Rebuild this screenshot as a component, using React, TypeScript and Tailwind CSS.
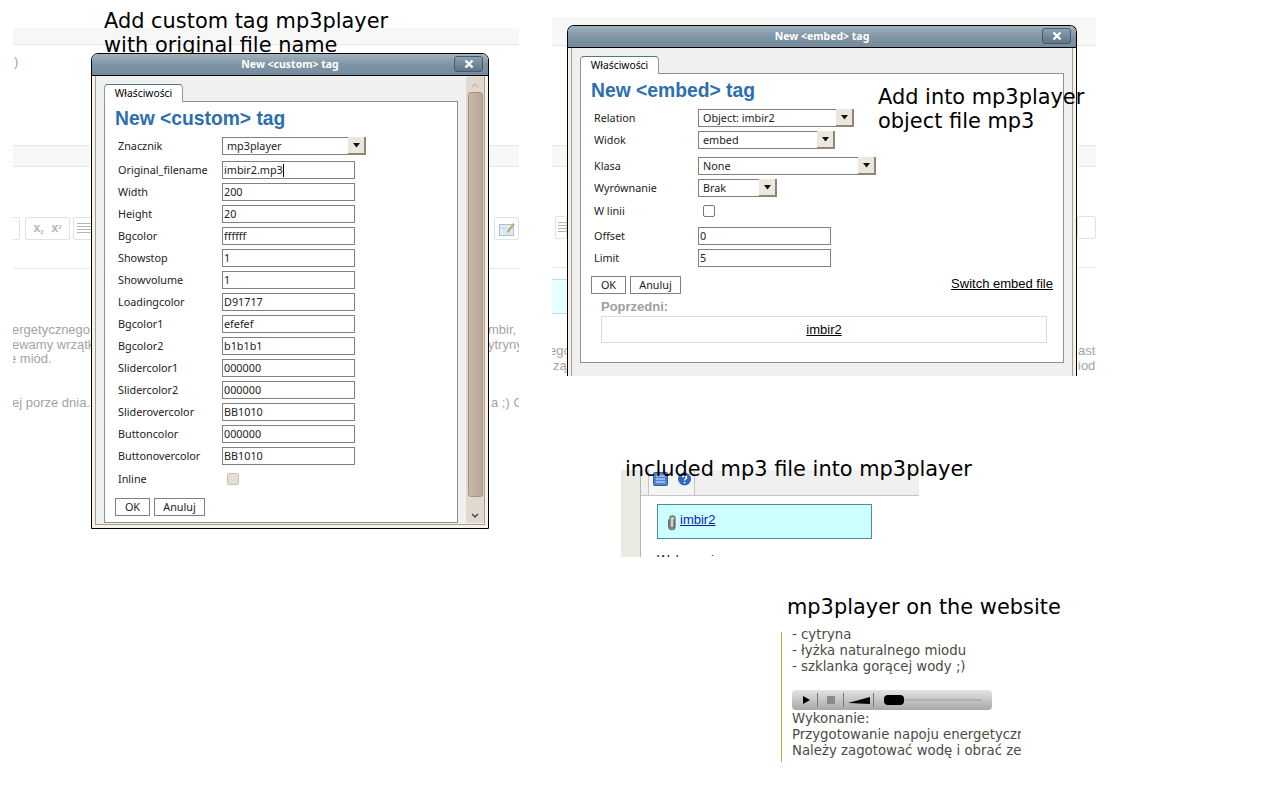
const customFields = [
  ["Original_filename", "imbir2.mp3"],
  ["Width", "200"],
  ["Height", "20"],
  ["Bgcolor", "ffffff"],
  ["Showstop", "1"],
  ["Showvolume", "1"],
  ["Loadingcolor", "D91717"],
  ["Bgcolor1", "efefef"],
  ["Bgcolor2", "b1b1b1"],
  ["Slidercolor1", "000000"],
  ["Slidercolor2", "000000"],
  ["Sliderovercolor", "BB1010"],
  ["Buttoncolor", "000000"],
  ["Buttonovercolor", "BB1010"],
];

function Caption({ className, children }: { className: string; children: React.ReactNode }) {
  return (
    <div className={`absolute whitespace-nowrap font-['DejaVu_Sans',sans-serif] text-[20.9px] leading-[24px] text-black ${className}`}>
      {children}
    </div>
  );
}

function TitleBar({ title }: { title: string }) {
  return (
    <div className="relative flex h-[22px] shrink-0 items-center justify-center rounded-t-[6px] border-b border-black bg-gradient-to-b from-[#a4b2bc] via-[#7f95a6] to-[#748c9e] font-['Noto_Sans',sans-serif] text-[10.5px] font-bold text-white">
      {title}
      <div className="absolute right-[5px] top-[2px] flex h-[16px] w-[29px] items-center justify-center rounded-[3px] border border-[#47596a] bg-gradient-to-b from-[#8ca0b0] to-[#5e7689]">
        <svg width="10" height="10" viewBox="0 0 10 10">
          <path d="M1.5 1.5 L8.5 8.5 M8.5 1.5 L1.5 8.5" stroke="#fff" strokeWidth="2.4" />
        </svg>
      </div>
    </div>
  );
}

function Tab() {
  return (
    <div className="relative z-10 -mb-px flex h-[18px] w-[79px] items-center justify-center rounded-t-[4px] border border-b-0 border-[#8b9aa3] border-t-[#50788f] bg-white font-['Noto_Sans',sans-serif] text-[10.3px] text-black">
      Właściwości
    </div>
  );
}

function Label({ children }: { children: React.ReactNode }) {
  return <div className="w-[107px] shrink-0 pl-[3px]">{children}</div>;
}

function TextField({ label, value, caret }: { label: string; value: string; caret?: boolean }) {
  return (
    <div className="flex h-[18px] items-center">
      <Label>{label}</Label>
      <div className="flex h-[18px] w-[133px] items-center border border-[#808080] bg-white pl-[1px]">
        {value}
        {caret && <span className="h-[13px] w-px bg-black" />}
      </div>
    </div>
  );
}

function SelectField({ label, value, width }: { label: string; value: string; width: string }) {
  return (
    <div className="flex h-[18px] items-center">
      <Label>{label}</Label>
      <div className={`flex h-[18px] items-center justify-between border border-[#808080] bg-white pl-[4px] ${width}`}>
        {value}
        <div className="-mr-px flex h-[18px] w-[18px] items-center justify-center border-r-2 border-b-2 border-[#8f8676] bg-[#ebe7df]">
          <svg width="7" height="5" viewBox="0 0 7 5">
            <path d="M0 0 H7 L3.5 4.5 Z" fill="#111" />
          </svg>
        </div>
      </div>
    </div>
  );
}

function Btn({ children, width }: { children: React.ReactNode; width: string }) {
  return (
    <div className={`flex h-[18px] items-center justify-center border border-[#808080] bg-white ${width}`}>{children}</div>
  );
}

function ScrollBar() {
  return (
    <div className="flex h-full w-[18px] flex-col items-center rounded-[2px] bg-[#e2d9ce] pt-[5px]">
      <svg width="12" height="11" viewBox="0 0 12 11" className="shrink-0">
        <path d="M3 6 L6 3 L9 6" stroke="#c9bdb0" strokeWidth="1.5" fill="none" />
      </svg>
      <div className="h-[405px] w-[15px] shrink-0 rounded-[3px] border border-[#a39484] bg-gradient-to-r from-[#c9b9a9] to-[#b8a797]" />
      <svg width="12" height="11" viewBox="0 0 12 11" className="mt-[13px] shrink-0">
        <path d="M3 4 L6 7 L9 4" stroke="#444" strokeWidth="1.5" fill="none" />
      </svg>
    </div>
  );
}

// faded editor page behind the dialogs
function Backdrop({ className, children }: { className: string; children: React.ReactNode }) {
  return (
    <div className={`absolute overflow-hidden bg-white font-['Liberation_Sans',sans-serif] text-[13px] leading-[15px] text-[#a3a3a3] ${className}`}>
      {children}
    </div>
  );
}

function Band({ className }: { className: string }) {
  return <div className={`absolute inset-x-0 border-b border-[#e6e6e6] bg-[#f7f7f7] ${className}`} />;
}

export default function App() {
  return (
    <div className="relative h-[800px] w-[1280px] overflow-hidden bg-white">
      {/* first screenshot, page behind */}
      <Backdrop className="left-[13px] top-[28px] h-[400px] w-[506px]">
        <Band className="top-0 h-[17px]" />
        <div className="absolute left-[1px] top-[26px]">)</div>
        <div className="absolute inset-x-0 top-[117px] h-[22px] border-y border-[#e6e6e6] bg-[#f7f7f7]" />
        <div className="absolute left-0 top-[189px] h-[23px] w-[7px] rounded-r-[2px] border border-l-0 border-[#e2e2e2]" />
        <div className="absolute left-[12px] top-[189px] flex h-[23px] w-[45px] items-center justify-center gap-[8px] rounded-[2px] border border-[#e2e2e2] text-[12px] font-bold text-[#b5b5b5]">
          <span>x<sub className="text-[6px]">2</sub></span>
          <span>x<sup className="text-[6px]">2</sup></span>
        </div>
        <div className="absolute left-[60px] top-[189px] h-[23px] w-[30px] rounded-[2px] border border-[#e2e2e2] pl-[3px] pt-[5px]">
          <div className="h-[10px] w-[14px] bg-[repeating-linear-gradient(#b5b5b5_0_1px,transparent_1px_3px)]" />
        </div>
        <div className="absolute right-0 top-[189px] flex h-[23px] w-[25px] items-center justify-center rounded-[2px] border border-[#e2e2e2]">
          <svg width="18" height="16" viewBox="0 0 18 16">
            <rect x="1.5" y="3.5" width="14" height="11" fill="#e3edf4" stroke="#a9c0d2" />
            <path d="M1.5 7 H15.5 M6 7 V14.5 M11 7 V14.5" stroke="#c5d6e2" />
            <path d="M9 10 L15 2 L17 3.5 L11 11 L8.5 12 Z" fill="#b9ad7c" />
          </svg>
        </div>
        <div className="absolute inset-x-0 top-[240px] border-b border-[#e6e6e6]" />
        <div className="absolute -left-[1px] top-[294px] whitespace-nowrap">ergetycznego</div>
        <div className="absolute -left-[1px] top-[309px] whitespace-nowrap">ewamy wrzątk</div>
        <div className="absolute -left-[4px] top-[323px] whitespace-nowrap">e miód.</div>
        <div className="absolute -left-[1px] top-[367px] whitespace-nowrap">ej porze dnia.</div>
        <div className="absolute left-[475px] top-[294px] whitespace-nowrap">mbir,</div>
        <div className="absolute left-[475px] top-[309px] whitespace-nowrap">ytryny</div>
        <div className="absolute left-[478px] top-[367px] whitespace-nowrap">a ;) Go</div>
      </Backdrop>

      <Caption className="left-[104px] top-[9px]">
        Add custom tag mp3player
        <br />
        with original file name
      </Caption>

      {/* custom tag dialog */}
      <div className="absolute left-[91px] top-[53px] z-10 flex h-[476px] w-[398px] flex-col rounded-t-[7px] border border-black bg-[#f6f2ea] font-['Noto_Sans',sans-serif] text-[10.8px] text-[#222]">
        <TitleBar title="New <custom> tag" />
        <div className="flex min-h-0 flex-1 pl-[3px] pr-[3px] pb-[3px]">
          <div className="flex min-w-0 flex-1 border-x border-b border-[#a79e92] bg-[#f0f0ee] pl-[8px]">
            <div className="flex w-[354px] shrink-0 flex-col pt-[8px] pb-[1px]">
              <Tab />
              <div className="flex flex-1 flex-col border border-[#8b9197] bg-white pl-[10px] pt-[6px]">
                <div className="mb-[7px] font-['Liberation_Sans',sans-serif] text-[19.3px] font-bold leading-[22px] text-[#2b6fb0]">
                  New &lt;custom&gt; tag
                </div>
                <div className="flex flex-col gap-[4px]">
                  <div className="mb-[2px]">
                    <SelectField label="Znacznik" value="mp3player" width="w-[144px]" />
                  </div>
                  {customFields.map(([label, value]) => (
                    <TextField key={label} label={label} value={value} caret={label === "Original_filename"} />
                  ))}
                </div>
                <div className="mt-[5px] flex h-[18px] items-center">
                  <Label>Inline</Label>
                  <div className="ml-[5px] h-[12px] w-[12px] rounded-[2px] border border-[#c9c2b8] bg-[#e6dfd5]" />
                </div>
                <div className="mt-[10px] flex gap-[4px]">
                  <Btn width="w-[35px]">OK</Btn>
                  <Btn width="w-[51px]">Anuluj</Btn>
                </div>
              </div>
            </div>
            <div className="ml-[8px] pb-[1px]">
              <ScrollBar />
            </div>
          </div>
        </div>
      </div>

      {/* second screenshot, page behind */}
      <Backdrop className="left-[552px] top-[17px] h-[359px] w-[544px]">
        <Band className="top-0 h-[29px]" />
        <div className="absolute inset-x-0 top-[128px] h-[22px] border-y border-[#e6e6e6] bg-[#f7f7f7]" />
        <div className="absolute left-[3px] top-[199px] h-[23px] w-[12px] rounded-[2px] border border-[#e2e2e2] pl-[2px] pt-[5px]">
          <div className="h-[10px] w-[10px] bg-[repeating-linear-gradient(#b5b5b5_0_1px,transparent_1px_3px)]" />
        </div>
        <div className="absolute right-0 top-[199px] h-[23px] w-[19px] rounded-[2px] border border-[#e2e2e2]" />
        <div className="absolute inset-x-0 top-[250px] border-b border-[#e6e6e6]" />
        <div className="absolute left-0 top-[262px] h-[35px] w-[16px] border-y border-[#b7dfe5] bg-[#e6ffff]" />
        <div className="absolute -left-[3px] top-[326px] whitespace-nowrap">ego</div>
        <div className="absolute left-[1px] top-[341px] whitespace-nowrap">ząt</div>
        <div className="absolute left-[526px] top-[326px] whitespace-nowrap">aste</div>
        <div className="absolute left-[526px] top-[341px] whitespace-nowrap">iod</div>
      </Backdrop>

      {/* embed tag dialog, cut off at the bottom */}
      <div className="absolute left-[567px] top-[25px] z-10 flex h-[351px] w-[510px] flex-col rounded-t-[7px] border border-b-0 border-black bg-[#f6f2ea] font-['Noto_Sans',sans-serif] text-[10.8px] text-[#222]">
        <TitleBar title="New <embed> tag" />
        <div className="flex min-h-0 flex-1 px-[3px]">
          <div className="flex min-w-0 flex-1 flex-col border-x border-[#a79e92] bg-[#f0f0ee] pl-[8px] pt-[8px]">
            <Tab />
            <div className="relative flex h-[290px] w-[484px] flex-col border border-[#8b9197] bg-white pl-[10px] pt-[6px]">
              <div className="mb-[7px] font-['Liberation_Sans',sans-serif] text-[19.3px] font-bold leading-[22px] text-[#2b6fb0]">
                New &lt;embed&gt; tag
              </div>
              <div className="flex flex-col gap-[4px]">
                <SelectField label="Relation" value="Object:  imbir2" width="w-[156px]" />
                <SelectField label="Widok" value="embed" width="w-[137px]" />
              </div>
              <div className="mt-[8px] flex flex-col gap-[4px]">
                <SelectField label="Klasa" value="None" width="w-[178px]" />
                <SelectField label="Wyrównanie" value="Brak" width="w-[79px]" />
              </div>
              <div className="mt-[5px] flex h-[18px] items-center">
                <Label>W linii</Label>
                <div className="ml-[5px] h-[12px] w-[12px] rounded-[2px] border border-[#777] bg-white" />
              </div>
              <div className="mt-[7px] flex flex-col gap-[4px]">
                <TextField label="Offset" value="0" />
                <TextField label="Limit" value="5" />
              </div>
              <div className="mt-[9px] flex items-start justify-between pr-[10px]">
                <div className="flex gap-[4px]">
                  <Btn width="w-[35px]">OK</Btn>
                  <Btn width="w-[51px]">Anuluj</Btn>
                </div>
                <a className="font-['Liberation_Sans',sans-serif] text-[13px] leading-[15px] text-black underline">Switch embed file</a>
              </div>
              <div className="ml-[10px] mt-[6px] font-['Liberation_Sans',sans-serif] text-[13px] font-bold leading-[14px] text-[#a0a0a0]">Poprzedni:</div>
              <div className="ml-[10px] mt-[2px] flex h-[27px] w-[446px] items-center justify-center border border-[#dcdcdc] font-['Liberation_Sans',sans-serif] text-[13px] text-black underline">
                imbir2
              </div>
            </div>
          </div>
        </div>
      </div>

      {/* third screenshot, editor with embedded file */}
      <div className="absolute left-[621px] top-[470px] flex h-[87px] w-[298px] overflow-hidden bg-white">
        <div className="h-full w-[20px] border-r border-[#b5b5b5] bg-[#ebebe4]" />
        <div className="flex-1 pl-[7px]">
          <div className="-ml-[7px] flex h-[26px] border-b border-[#c4c4c4] bg-[#f0f0f0] pl-[7px]">
            <div className="flex h-[26px] w-[47px] items-start gap-[9px] rounded-bl-[2px] border-x border-b border-[#c4c4c4] bg-[#f4f4f4] pl-[4px] pt-[2px]">
              <svg width="15" height="14" viewBox="0 0 15 14">
                <rect x="0.5" y="0.5" width="14" height="13" rx="1" fill="#4f82cf" stroke="#30609f" />
                <path d="M3 4 H12 M3 7 H12 M3 10 H12" stroke="#dce8f8" strokeWidth="1.2" />
              </svg>
              <svg width="15" height="14" viewBox="0 0 15 14">
                <circle cx="7.5" cy="7" r="6.5" fill="#2f66bd" />
                <path d="M5.5 5.4 C5.8 3.2 9.6 3.4 9.5 5.6 C9.4 7 7.5 7 7.5 8.6" stroke="#fff" strokeWidth="1.5" fill="none" />
                <circle cx="7.5" cy="10.6" r="0.9" fill="#fff" />
              </svg>
            </div>
          </div>
          <div className="ml-[9px] mt-[8px] flex h-[35px] w-[215px] items-center border border-[#4f8a9b] bg-[#ccffff] pl-[8px] font-['Liberation_Sans',sans-serif] text-[13px] text-[#0a1fb0]">
            <svg width="12" height="16" viewBox="0 0 12 16" className="mt-[3px] shrink-0">
              <path
                d="M8 4.5 V11 A2 2 0 0 1 4 11 V3.5 A2.5 2.5 0 0 1 9 3.5 V11.5 A3.2 3.2 0 0 1 2.6 11.5 V4.5"
                fill="#c9d2d2"
                stroke="#6f6f6f"
                strokeWidth="1.3"
              />
            </svg>
            <span className="ml-[2px] -translate-y-[2px] underline">imbir2</span>
          </div>
          <div className="ml-[9px] mt-[13px] font-['Liberation_Sans',sans-serif] text-[13px] leading-[15px] text-[#222]">Wykonanie:</div>
        </div>
      </div>

      {/* fourth screenshot, player on the site */}
      <div className="absolute left-[781px] top-[629px] h-[133px] w-[240px] overflow-hidden pl-[11px] font-['DejaVu_Sans',sans-serif] text-[13.3px] leading-[16px] text-[#4b4b42]">
        <div className="absolute bottom-0 left-0 top-[3px] w-px bg-[#a5bd3a]" />
        <div className="-mt-[2px] whitespace-nowrap">- cytryna</div>
        <div className="whitespace-nowrap">- łyżka naturalnego miodu</div>
        <div className="whitespace-nowrap">- szklanka gorącej wody ;)</div>
        <div className="mt-[15px] flex h-[20px] w-[200px] items-center rounded-[4px] bg-gradient-to-b from-[#e4e4e4] to-[#a9a9a9]">
          <svg width="200" height="20" viewBox="0 0 200 20">
            <path d="M11 6 L18 10 L11 14 Z" fill="#000" />
            <path d="M25.5 3 V17 M51.5 3 V17 M81.5 3 V17" stroke="#777" />
            <rect x="35" y="6" width="8" height="8" fill="#8a8a8a" />
            <path d="M56 13 L78 7 V14 Z" fill="#000" />
            <path d="M92 10 H190" stroke="#999" />
            <rect x="92" y="5" width="20" height="10" rx="4" fill="#000" />
          </svg>
        </div>
        <div className="mt-px whitespace-nowrap">Wykonanie:</div>
        <div className="whitespace-nowrap">Przygotowanie napoju energetycznego</div>
        <div className="whitespace-nowrap">Należy zagotować wodę i obrać ze skórki</div>
      </div>

      <Caption className="z-20 left-[878px] top-[85px]">
        Add into mp3player
        <br />
        object file mp3
      </Caption>
      <Caption className="z-20 left-[625px] top-[457px]">included mp3 file into mp3player</Caption>
      <Caption className="z-20 left-[787px] top-[595px]">mp3player on the website</Caption>
    </div>
  );
}
